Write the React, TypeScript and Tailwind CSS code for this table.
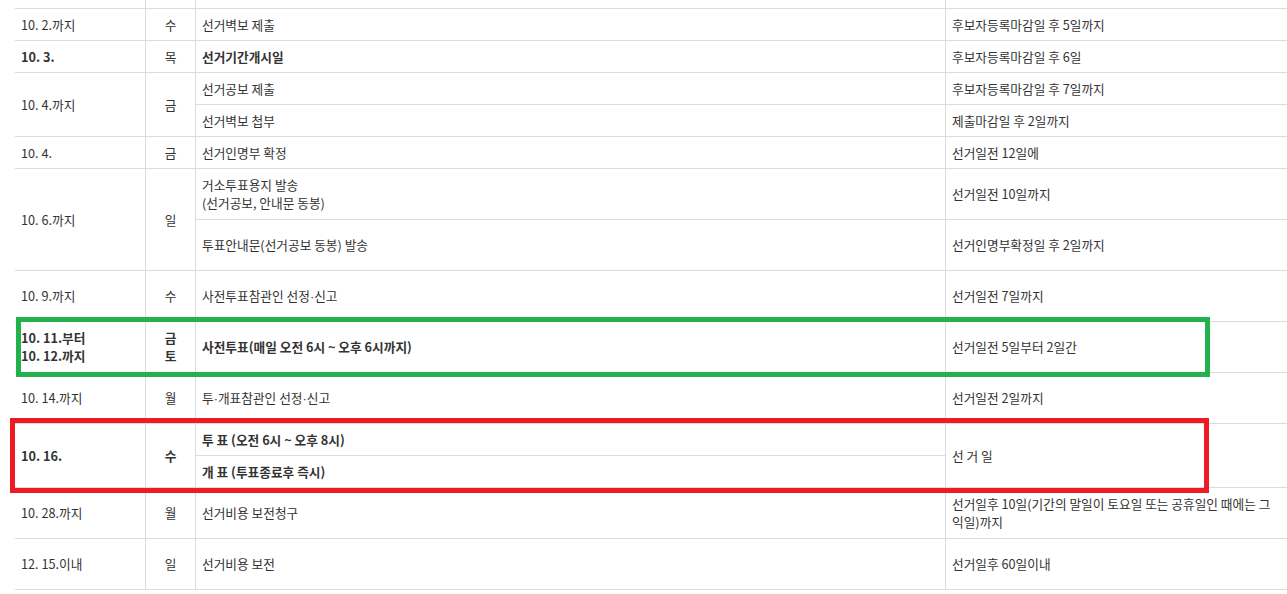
type Row = {
  date?: string[];
  day?: string[];
  task: string[];
  due?: string;
  span?: boolean;
  bold?: boolean;
  dayBold?: boolean;
  dueSpan?: boolean;
};

const rows: Row[] = [
  { date: ['10. 2.까지'], day: ['수'], task: ['선거벽보 제출'], due: '후보자등록마감일 후 5일까지' },
  { date: ['10. 3.'], day: ['목'], task: ['선거기간개시일'], due: '후보자등록마감일 후 6일', bold: true },
  { date: ['10. 4.까지'], day: ['금'], task: ['선거공보 제출'], due: '후보자등록마감일 후 7일까지', span: true },
  { task: ['선거벽보 첩부'], due: '제출마감일 후 2일까지' },
  { date: ['10. 4.'], day: ['금'], task: ['선거인명부 확정'], due: '선거일전 12일에' },
  { date: ['10. 6.까지'], day: ['일'], task: ['거소투표용지 발송', '(선거공보, 안내문 동봉)'], due: '선거일전 10일까지', span: true },
  { task: ['투표안내문(선거공보 동봉) 발송'], due: '선거인명부확정일 후 2일까지' },
  { date: ['10. 9.까지'], day: ['수'], task: ['사전투표참관인 선정·신고'], due: '선거일전 7일까지' },
  { date: ['10. 11.부터', '10. 12.까지'], day: ['금', '토'], task: ['사전투표(매일 오전 6시 ~ 오후 6시까지)'], due: '선거일전 5일부터 2일간', bold: true, dayBold: true },
  { date: ['10. 14.까지'], day: ['월'], task: ['투·개표참관인 선정·신고'], due: '선거일전 2일까지' },
  { date: ['10. 16.'], day: ['수'], task: ['투 표 (오전 6시 ~ 오후 8시)'], due: '선 거 일', span: true, dueSpan: true, bold: true, dayBold: true },
  { task: ['개 표 (투표종료후 즉시)'], bold: true },
  { date: ['10. 28.까지'], day: ['월'], task: ['선거비용 보전청구'], due: '선거일후 10일(기간의 말일이 토요일 또는 공휴일인 때에는 그 익일)까지' },
  { date: ['12. 15.이내'], day: ['일'], task: ['선거비용 보전'], due: '선거일후 60일이내' },
];

const cell = 'flex items-center border-b border-r border-[#dcdcdc]';

// the CJK font sets "·" full width; the reference has a narrow dot
function Dotted({ text }: { text: string }) {
  const parts = text.split('·');
  return (
    <>
      {parts.map((p, i) => (
        <span key={i}>
          {i > 0 && <span className="font-['Liberation_Sans']">·</span>}
          {p}
        </span>
      ))}
    </>
  );
}

function Lines({ items }: { items: string[] }) {
  return (
    <div>
      {items.map((t, i) => (
        <div key={i}>
          <Dotted text={t} />
        </div>
      ))}
    </div>
  );
}

export default function App() {
  return (
    <div
      className="relative w-[1287px] h-[594px] overflow-hidden bg-white text-[12.7px] leading-[18px] text-[#333]"
      style={{ fontFamily: '"Noto Sans CJK KR", "Noto Sans", sans-serif' }}
    >
      <div className="ml-[15px] grid grid-cols-[131px_50px_750px_1fr] grid-rows-[9px_32px_32px_32px_32px_32px_51px_51px_51px_51px_51px_32px_32px_51px_51px]">
        {/* cut-off row above */}
        <div className={cell} />
        <div className={cell} />
        <div className={cell} />
        <div className="border-b border-[#dcdcdc]" />

        {rows.map((r, i) => (
          <div key={i} className="contents">
            {r.date && (
              <div className={`${cell} pl-[6px] ${r.span ? 'row-span-2' : ''} ${r.bold ? 'font-bold' : ''}`}>
                <Lines items={r.date} />
              </div>
            )}
            {r.day && (
              <div className={`${cell} justify-center text-center ${r.span ? 'row-span-2' : ''} ${r.dayBold ? 'font-bold' : ''}`}>
                <Lines items={r.day} />
              </div>
            )}
            <div className={`${cell} pl-[6px] ${r.bold ? 'font-bold' : ''}`}>
              <Lines items={r.task} />
            </div>
            {r.due && (
              <div className={`flex items-center border-b border-[#dcdcdc] pl-[6px] pr-[4px] break-keep ${r.dueSpan ? 'row-span-2' : ''}`}>
                {r.due}
              </div>
            )}
          </div>
        ))}
      </div>

      {/* hand-drawn highlight boxes */}
      <div className="absolute left-[16px] top-[317px] w-[1194px] h-[60px] border-[5px] border-[#22b14c]" />
      <div className="absolute left-[10px] top-[418px] w-[1199px] h-[75px] border-[5px] border-[#ed1c24]" />
    </div>
  );
}
